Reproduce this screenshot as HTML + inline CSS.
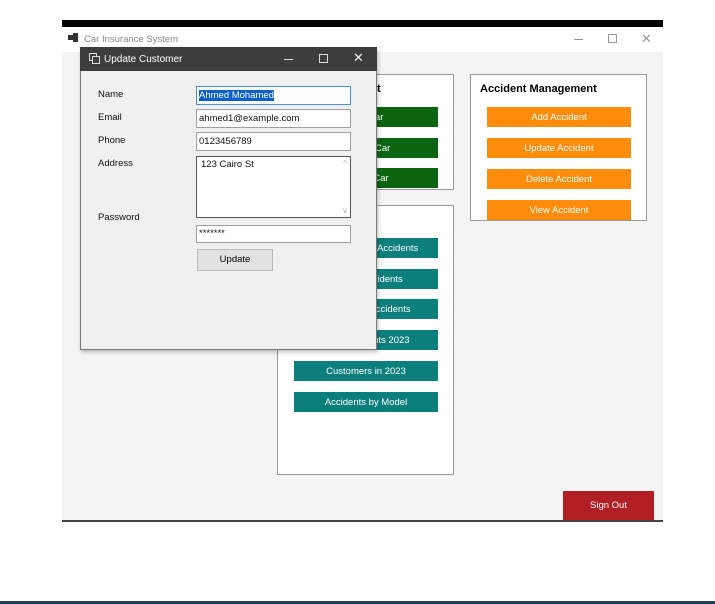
<!DOCTYPE html>
<html><head><style>
*{margin:0;padding:0;box-sizing:border-box}
body{width:715px;height:604px;background:#fff;position:relative;overflow:hidden;font-family:"Liberation Sans",sans-serif;font-size:10px}
.a{position:absolute}
.btn{position:absolute;color:#fff;text-align:center;font-size:9.5px;line-height:20px;height:20px;padding-top:1px}
.g{background:#0a6410;left:294px;width:144px}
.t{background:#0b7f7b;left:294px;width:144px}
.o{background:#ff8c0a;left:487px;width:144px}
.box{position:absolute;background:#fff;border:1px solid #999}
.lbl{position:absolute;left:98px;font-size:9.5px;color:#111}
.in{position:absolute;left:196px;width:155px;background:#fff;border:1px solid #a0a0a0;font-size:9.5px;padding-left:2px;color:#111}
</style></head><body>
<div class="a" style="left:62px;top:20px;width:601px;height:7px;background:#000"></div>
<div class="a" style="left:62px;top:27px;width:601px;height:25px;background:#fff"></div>
<div class="a" style="left:68px;top:35px;width:5px;height:5px;background:#333"></div>
<div class="a" style="left:73px;top:33px;width:5px;height:9px;background:#333"></div>
<div class="a" style="left:84px;top:34px;color:#888;font-size:9.5px">Car Insurance System</div>
<div class="a" style="left:574px;top:39px;width:9px;height:1px;background:#999"></div>
<div class="a" style="left:608px;top:34px;width:9px;height:9px;border:1px solid #999"></div>
<div class="a" style="left:641px;top:31px;color:#999;font-size:13px">✕</div>
<div class="a" style="left:62px;top:52px;width:601px;height:470px;background:#f4f4f4;border-bottom:2px solid #444"></div>

<div class="box" style="left:277px;top:74px;width:177px;height:116px"></div>
<div class="a" style="left:292px;top:83px;font-weight:bold;font-size:11px">Car Management</div>
<div class="btn g" style="top:107px">Add Car</div>
<div class="btn g" style="top:138px">Update Car</div>
<div class="btn g" style="top:168px">Delete Car</div>

<div class="box" style="left:277px;top:205px;width:177px;height:270px"></div>
<div class="btn t" style="top:238px">Most Frequent Accidents</div>
<div class="btn t" style="top:269px">Recent Accidents</div>
<div class="btn t" style="top:299px">Customers Accidents</div>
<div class="btn t" style="top:330px">Total Accidents 2023</div>
<div class="btn t" style="top:361px">Customers in 2023</div>
<div class="btn t" style="top:392px">Accidents by Model</div>

<div class="box" style="left:470px;top:74px;width:177px;height:147px"></div>
<div class="a" style="left:480px;top:83px;font-weight:bold;font-size:11px;color:#000">Accident Management</div>
<div class="btn o" style="top:107px">Add Accident</div>
<div class="btn o" style="top:138px">Update Accident</div>
<div class="btn o" style="top:169px">Delete Accident</div>
<div class="btn o" style="top:200px">View Accident</div>

<div class="btn" style="left:563px;top:491px;width:91px;height:29px;line-height:27px;background:#b11f24">Sign Out</div>

<div class="a" style="left:80px;top:47px;width:297px;height:303px;background:#f0f0f0;border:1px solid #777;box-shadow:1px 2px 4px rgba(0,0,0,.25)"></div>
<div class="a" style="left:80px;top:47px;width:297px;height:24px;background:#3d3d3d"></div>
<div class="a" style="left:89px;top:53px;width:8px;height:8px;border:1px solid #ddd"></div>
<div class="a" style="left:92px;top:56px;width:8px;height:8px;border:1px solid #ddd;background:#3d3d3d"></div>
<div class="a" style="left:104px;top:54px;color:#fff;font-size:10px">Update Customer</div>
<div class="a" style="left:284px;top:59px;width:9px;height:1px;background:#ddd"></div>
<div class="a" style="left:319px;top:54px;width:9px;height:9px;border:1px solid #ddd"></div>
<div class="a" style="left:353px;top:50px;color:#eee;font-size:13px">✕</div>

<div class="lbl" style="top:89px">Name</div>
<div class="lbl" style="top:112px">Email</div>
<div class="lbl" style="top:135px">Phone</div>
<div class="lbl" style="top:158px">Address</div>
<div class="lbl" style="top:212px">Password</div>
<div class="in" style="top:86px;height:19px;border-color:#4a8fd6;line-height:17px"><span style="background:#0a5fc8;color:#fff">Ahmed Mohamed</span></div>
<div class="in" style="top:109px;height:19px;line-height:17px">ahmed1@example.com</div>
<div class="in" style="top:132px;height:19px;line-height:17px">0123456789</div>
<div class="in" style="top:156px;height:62px;border-color:#555;padding:2px 4px">123 Cairo St<span style="position:absolute;right:3px;top:2px;color:#aaa;font-size:8px">^</span><span style="position:absolute;right:3px;bottom:2px;color:#aaa;font-size:8px">v</span></div>
<div class="in" style="top:225px;height:18px;line-height:15px">*******</div>
<div class="a" style="left:197px;top:249px;width:76px;height:22px;background:#e1e1e1;border:1px solid #bbb;text-align:center;line-height:20px;font-size:9.5px">Update</div>

<div class="a" style="left:0;top:601px;width:715px;height:3px;background:#1f3d57"></div>
</body></html>
